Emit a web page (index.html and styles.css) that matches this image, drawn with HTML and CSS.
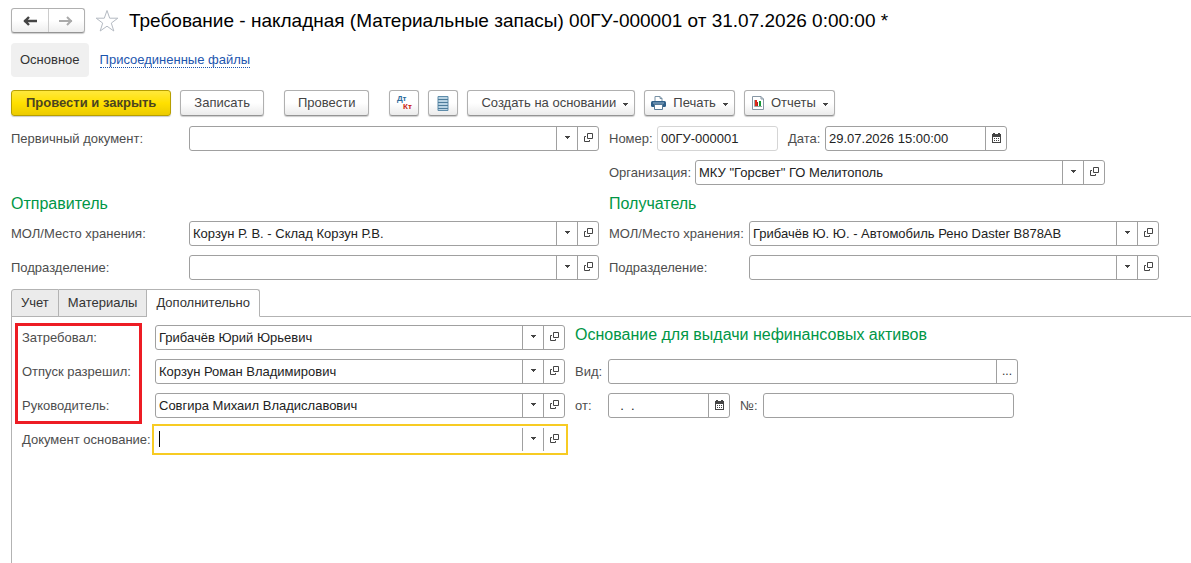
FILE: index.html
```html
<!DOCTYPE html>
<html lang="ru">
<head>
<meta charset="utf-8">
<meta name="viewport" content="width=device-width, initial-scale=1">
<title>Требование - накладная</title>
<link rel="stylesheet" href="styles.css">
</head>
<body>
<svg class="sprite" aria-hidden="true">
  <symbol id="i-down" viewBox="0 0 5 3"><path d="M0 0h5v1H4v1H3v1H2V2H1V1H0z" fill="#444"/></symbol>
  <symbol id="i-open" viewBox="0 0 9 9"><path d="M3.500.5h5v5h-5zM2 3.500H.5v5h5V7" fill="none" stroke="#444"/></symbol>
  <symbol id="i-cal" viewBox="0 0 9 10"><path d="M0 1h1V0h2v1h3V0h2v1h1v9H0zM1 4v5h7V4z" fill="#444" fill-rule="evenodd"/><path d="M2 5h1v1H2zM4 5h1v1H4zM6 5h1v1H6zM2 7h1v1H2zM4 7h1v1H4zM6 7h1v1H6z" fill="#444"/></symbol>
</svg>

<header class="title-bar">
  <div class="history">
    <button type="button" aria-label="Назад"><svg width="14" height="10" viewBox="0 0 14 10"><path d="M1 5h13M6 1L2 5l4 4" fill="none" stroke="#444" stroke-width="2.400"/></svg></button>
    <button type="button" aria-label="Вперед"><svg width="14" height="10" viewBox="0 0 14 10"><path d="M0 5h13M8 1l4 4-4 4" fill="none" stroke="#aaa" stroke-width="2"/></svg></button>
  </div>
  <button class="star" type="button" aria-label="В избранное"><svg width="24" height="24" viewBox="0 0 24 24"><path d="M12 1.500l2.700 7.700h8.100l-6.500 4.900 2.500 7.900-6.800-4.800L5.200 22l2.500-7.900-6.500-4.900h8.100z" fill="#fff" stroke="#b4bac2"/></svg></button>
  <h1>Требование - накладная (Материальные запасы) 00ГУ-000001 от 31.07.2026 0:00:00 *</h1>
</header>

<nav class="sections">
  <span class="section-current">Основное</span>
  <a href="#files">Присоединенные файлы</a>
</nav>

<div class="toolbar">
  <button class="btn btn-primary" type="button">Провести и закрыть</button>
  <button class="btn btn-save" type="button">Записать</button>
  <button class="btn" type="button">Провести</button>
  <button class="btn btn-icon btn-postings" type="button" aria-label="Проводки"><span class="debit">Дт</span><span class="credit">Кт</span></button>
  <button class="btn btn-icon" type="button" aria-label="Реестр"><svg width="12" height="15" viewBox="0 0 12 15"><path d="M1 .5h10v14H1z" fill="#b9d3e3" stroke="#5f8dab"/><path d="M1 3.500h10M1 6.500h10M1 9.500h10M1 12.500h10" stroke="#4d7c9b"/></svg></button>
  <button class="btn" type="button">Создать на основании<svg class="caret" viewBox="0 0 5 3"><use href="#i-down"/></svg></button>
  <button class="btn btn-pic" type="button"><svg width="15" height="14" viewBox="0 0 15 14"><path d="M4 5V.5h5l2 2V5" fill="#fff" stroke="#7891a5"/><path d="M9 .5v2h2" fill="none" stroke="#7891a5"/><rect y="5" width="15" height="6" rx="1.500" fill="#2f5f88"/><path d="M2 7h11" stroke="#9cb8cf"/><path d="M3.500 8.500h8v5h-8z" fill="#fff" stroke="#587a96"/></svg>Печать<svg class="caret" viewBox="0 0 5 3"><use href="#i-down"/></svg></button>
  <button class="btn btn-pic btn-report" type="button"><svg width="12" height="14" viewBox="0 0 12 14"><path d="M.5.5H9L11.500 3v10.500H.5z" fill="#fff" stroke="#8797a5"/><path d="M9 .5V3h2.500" fill="none" stroke="#8797a5"/><path d="M2.500 4v6.500H10" fill="none" stroke="#9aa"/><path d="M3 4h2v6H3z" fill="#e02818"/><path d="M5 6h1v4H5z" fill="#a22"/><path d="M7 5h2v5H7z" fill="#159a35"/></svg>Отчеты<svg class="caret" viewBox="0 0 5 3"><use href="#i-down"/></svg></button>
</div>

<main>
  <div class="head-form">
    <section class="col">
      <div class="row">
        <label class="label-sender" for="primary">Первичный документ:</label>
        <div class="field"><input id="primary" type="text"><button type="button" aria-label="Выбрать"><svg class="down"><use href="#i-down"/></svg></button><button type="button" aria-label="Открыть"><svg class="open"><use href="#i-open"/></svg></button></div>
      </div>
      <div class="row"></div>
      <h2>Отправитель</h2>
      <div class="row">
        <label class="label-sender" for="s-place">МОЛ/Место хранения:</label>
        <div class="field"><input id="s-place" type="text" value="Корзун Р. В. - Склад Корзун Р.В."><button type="button" aria-label="Выбрать"><svg class="down"><use href="#i-down"/></svg></button><button type="button" aria-label="Открыть"><svg class="open"><use href="#i-open"/></svg></button></div>
      </div>
      <div class="row">
        <label class="label-sender" for="s-dept">Подразделение:</label>
        <div class="field"><input id="s-dept" type="text"><button type="button" aria-label="Выбрать"><svg class="down"><use href="#i-down"/></svg></button><button type="button" aria-label="Открыть"><svg class="open"><use href="#i-open"/></svg></button></div>
      </div>
    </section>
    <section class="col">
      <div class="row">
        <label class="label-number" for="number">Номер:</label>
        <div class="field field-number"><input id="number" type="text" value="00ГУ-000001" readonly></div>
        <label class="label-date" for="date">Дата:</label>
        <div class="field field-date"><input id="date" type="text" value="29.07.2026 15:00:00"><button type="button" aria-label="Календарь"><svg class="cal"><use href="#i-cal"/></svg></button></div>
      </div>
      <div class="row">
        <label class="label-org" for="org">Организация:</label>
        <div class="field"><input id="org" type="text" value="МКУ &quot;Горсвет&quot; ГО Мелитополь"><button type="button" aria-label="Выбрать"><svg class="down"><use href="#i-down"/></svg></button><button type="button" aria-label="Открыть"><svg class="open"><use href="#i-open"/></svg></button></div>
      </div>
      <h2>Получатель</h2>
      <div class="row">
        <label class="label-receiver" for="r-place">МОЛ/Место хранения:</label>
        <div class="field"><input id="r-place" type="text" value="Грибачёв Ю. Ю. - Автомобиль Рено Daster В878АВ"><button type="button" aria-label="Выбрать"><svg class="down"><use href="#i-down"/></svg></button><button type="button" aria-label="Открыть"><svg class="open"><use href="#i-open"/></svg></button></div>
      </div>
      <div class="row">
        <label class="label-receiver" for="r-dept">Подразделение:</label>
        <div class="field"><input id="r-dept" type="text"><button type="button" aria-label="Выбрать"><svg class="down"><use href="#i-down"/></svg></button><button type="button" aria-label="Открыть"><svg class="open"><use href="#i-open"/></svg></button></div>
      </div>
    </section>
  </div>

  <div class="tabs" role="tablist">
    <button type="button" role="tab" aria-selected="false">Учет</button>
    <button type="button" role="tab" aria-selected="false">Материалы</button>
    <button type="button" role="tab" aria-selected="true">Дополнительно</button>
  </div>
  <div class="panel" role="tabpanel">
    <section class="col persons">
      <div class="row">
        <label class="label-person" for="asked">Затребовал:</label>
        <div class="field"><input id="asked" type="text" value="Грибачёв Юрий Юрьевич"><button type="button" aria-label="Выбрать"><svg class="down"><use href="#i-down"/></svg></button><button type="button" aria-label="Открыть"><svg class="open"><use href="#i-open"/></svg></button></div>
      </div>
      <div class="row">
        <label class="label-person" for="allowed">Отпуск разрешил:</label>
        <div class="field"><input id="allowed" type="text" value="Корзун Роман Владимирович"><button type="button" aria-label="Выбрать"><svg class="down"><use href="#i-down"/></svg></button><button type="button" aria-label="Открыть"><svg class="open"><use href="#i-open"/></svg></button></div>
      </div>
      <div class="row">
        <label class="label-person" for="chief">Руководитель:</label>
        <div class="field"><input id="chief" type="text" value="Совгира Михаил Владиславович"><button type="button" aria-label="Выбрать"><svg class="down"><use href="#i-down"/></svg></button><button type="button" aria-label="Открыть"><svg class="open"><use href="#i-open"/></svg></button></div>
      </div>
      <div class="row">
        <label class="label-person" for="basis">Документ основание:</label>
        <div class="field field-active"><input id="basis" type="text"><span class="text-cursor"></span><button type="button" aria-label="Выбрать"><svg class="down"><use href="#i-down"/></svg></button><button type="button" aria-label="Открыть"><svg class="open"><use href="#i-open"/></svg></button></div>
      </div>
      <div class="highlight"></div>
    </section>
    <section class="col">
      <div class="row row-heading"><h2>Основание для выдачи нефинансовых активов</h2></div>
      <div class="row">
        <label class="label-basis" for="kind">Вид:</label>
        <div class="field"><input id="kind" type="text"><button type="button" aria-label="Выбрать">...</button></div>
      </div>
      <div class="row">
        <label class="label-basis" for="from">от:</label>
        <div class="field field-from"><input id="from" type="text" value="  .  ."><button type="button" aria-label="Календарь"><svg class="cal"><use href="#i-cal"/></svg></button></div>
        <label class="label-no" for="no">№:</label>
        <div class="field field-no"><input id="no" type="text"></div>
      </div>
    </section>
  </div>
</main>
</body>
</html>
```
FILE: styles.css
```css
* { box-sizing: border-box; }

body {
  display: flex;
  flex-direction: column;
  min-height: 100vh;
  margin: 0;
  padding: 8px 0 0 11px;
  background: #fff;
  color: #333;
  font: 13px/16px "Liberation Sans", Arial, sans-serif;
}

button, input { color: inherit; font: inherit; }
button { margin: 0; padding: 0; }
.sprite { position: absolute; width: 0; height: 0; }

.title-bar { display: flex; align-items: center; height: 25px; }
.history {
  display: flex;
  width: 74px;
  height: 25px;
  border: 1px solid #b0b0b0;
  border-bottom-color: #949494;
  border-radius: 3px;
  background: linear-gradient(#fff 50%, #eee);
  box-shadow: 0 1px 1px #ccc;
}
.history button {
  display: grid;
  flex: 1;
  place-items: center;
  border: 0;
  background: none;
}
.history button + button { border-left: 1px solid #ccc; }
.star { display: grid; margin: 0 10px; border: 0; background: none; }
h1 { margin: 0; color: #000; font-size: 19px; font-weight: 400; line-height: 24px; white-space: nowrap; }

.sections { display: flex; align-items: center; gap: 11px; margin-top: 10px; }
.section-current { padding: 9px; border-radius: 4px; background: #f0f0f0; }
.sections a {
  border-bottom: 1px dotted #1c55ae;
  color: #1c55ae;
  line-height: 14px;
  text-decoration: none;
}

.toolbar { display: flex; align-items: flex-start; gap: 9px; margin-top: 13px; }
.btn {
  display: flex;
  align-items: center;
  justify-content: center;
  height: 26px;
  padding: 0 13px;
  border: 1px solid #b0b0b0;
  border-bottom-color: #949494;
  border-radius: 3px;
  background: linear-gradient(#fff 50%, #ebebeb);
  box-shadow: 0 1px 1px #ccc;
  color: #444;
  white-space: nowrap;
}
.btn-primary {
  padding: 0 14px;
  border-color: #b79f00;
  background: linear-gradient(#ffe83c, #ffe000 50%, #eccb00);
  color: #4b4420;
  font-weight: 700;
}
.btn-save { margin-right: 11px; }
.btn-icon { width: 30px; padding: 0; }
.btn-postings {
  display: grid;
  grid-template-columns: 15px;
  align-content: center;
  margin-left: 11px;
  font-size: 8px;
  font-weight: 700;
  line-height: 8px;
}
.debit { justify-self: start; color: #2d6c9c; }
.credit { justify-self: end; color: #cb1a0c; }
.btn-pic { padding: 0 6px; }
.btn-pic > svg:first-child { margin-right: 7px; }
.btn-report > svg:first-child { margin-left: 1px; }
.caret { width: 5px; height: 3px; margin: 2px 0 0 7px; }
.btn:not(.btn-pic) > .caret { margin-right: -7px; }

main { display: flex; flex: 1; flex-direction: column; }
.head-form {
  display: grid;
  grid-template-columns: minmax(0, 588fr) minmax(0, 582fr);
  gap: 10px;
  margin-top: 10px;
}
.col { display: flex; flex-direction: column; min-width: 0; }
.row { display: flex; align-items: center; min-height: 25px; margin-bottom: 9px; }
label { flex: none; color: #4d4d4d; white-space: nowrap; }
h2 { margin: 0; color: #009646; font-size: 16px; font-weight: 400; line-height: 20px; white-space: nowrap; }
.head-form h2 { margin-bottom: 7px; }
.row-heading { align-items: flex-start; }

.label-sender { width: 178px; }
.label-receiver { width: 140px; }
.label-org { width: 86px; }
.label-number { width: 48px; }
.label-date { width: 37px; margin-left: 10px; }
.label-person { width: 133px; }
.label-basis { width: 33px; }
.label-no { width: 23px; margin-left: 10px; }

.field {
  position: relative;
  display: flex;
  flex: 0 1 410px;
  min-width: 0;
  height: 25px;
  border: 1px solid #a0a0a0;
  border-radius: 3px;
  background: #fff;
}
.field input {
  flex: 1;
  width: 0;
  min-width: 0;
  padding: 0 3px;
  border: 0;
  outline: 0;
  background: none;
  color: #222;
}
.field button {
  display: grid;
  flex: none;
  place-items: center;
  width: 21px;
  padding-bottom: 2px;
  border: 0;
  border-left: 1px solid #a0a0a0;
  background: none;
  font-size: 12px;
}
.field-number { flex-basis: 121px; border-color: #d5d5d5; }
.field-date { flex-basis: 182px; }
.field-from { flex-basis: 122px; }
.field-no { flex-basis: 251px; }
.field-from input { padding-left: 4px; white-space: pre; }
.field-active { border-color: transparent; border-radius: 0; outline: 2px solid #f7cb23; outline-offset: 1px; }
.text-cursor { position: absolute; top: 3px; left: 3px; width: 1px; height: 16px; background: #000; }
.down { width: 5px; height: 3px; }
.open { width: 9px; height: 9px; }
.cal { width: 9px; height: 10px; }

.tabs { display: flex; position: relative; margin-bottom: -1px; }
.tabs button {
  height: 28px;
  padding: 0 9px;
  border: 1px solid #b3b3b3;
  border-left-width: 0;
  background: #ebebeb;
}
.tabs button:first-child { border-left-width: 1px; border-radius: 3px 0 0 0; }
.tabs button[aria-selected="true"] { border-bottom-color: #fff; border-radius: 0 3px 0 0; background: #fff; }
.panel {
  display: grid;
  flex: 1;
  grid-template-columns: minmax(0, 543fr) minmax(0, 606fr);
  align-content: start;
  gap: 10px;
  padding: 8px 10px 0;
  border: 1px solid #b3b3b3;
  border-width: 1px 0 0 1px;
}
.persons { position: relative; }
.highlight {
  position: absolute;
  top: -2px;
  left: -7px;
  width: 127px;
  height: 101px;
  border: 3px solid #ed1c24;
  pointer-events: none;
}
```
